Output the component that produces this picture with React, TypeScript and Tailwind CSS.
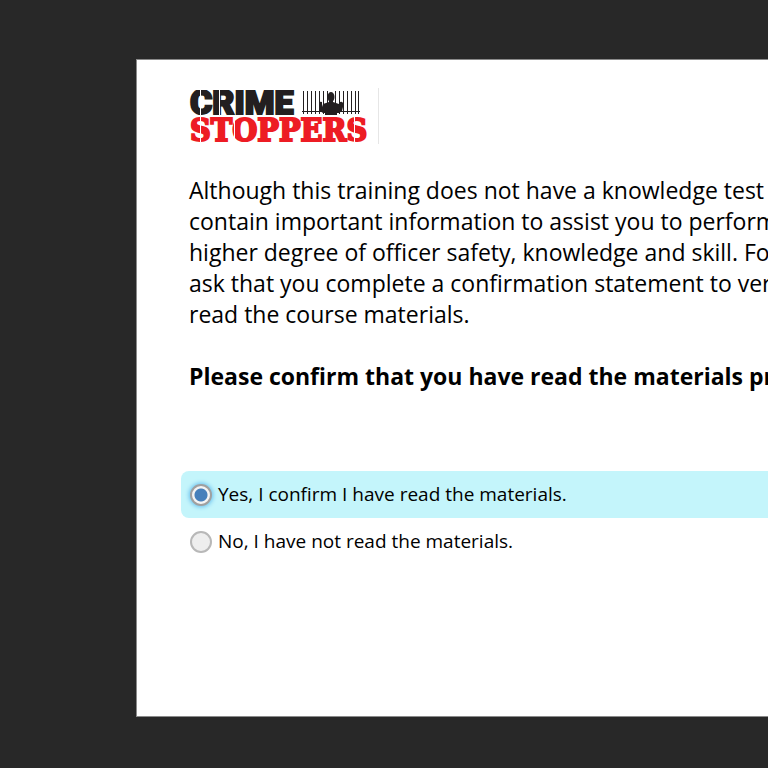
import React from 'react';

const barPositions = [303, 307, 311, 315, 319, 323, 339, 343, 347, 351, 355, 358];
const topCuts = [200, 219];
const bottomCuts = [200, 234, 354];

const Logo: React.FC = () => (
  <svg viewBox="189 88 178 56" className="h-14 w-[178px] shrink-0" role="img" aria-label="Crime Stoppers">
    <text x="190" y="114" fontFamily="Roboto, sans-serif" fontWeight="900" fontSize="34" fill="#231f20" stroke="#231f20" strokeWidth="2">
      CRIME
    </text>
    <text
      x="190"
      y="141"
      fontFamily="'DejaVu Serif Condensed', 'DejaVu Serif', serif"
      fontWeight="700"
      fontSize="32"
      fill="#ed1c24"
      stroke="#ed1c24"
      strokeWidth="2"
    >
      STOPPERS
    </text>
    <g fill="#ffffff">
      <rect x="189" y="88" width="178" height="2" />
      <rect x="189" y="115" width="178" height="1" />
      {topCuts.map((x) => (
        <rect key={x} x={x} y="88" width="1" height="28" />
      ))}
      {bottomCuts.map((x) => (
        <rect key={x} x={x} y="116" width="1" height="28" />
      ))}
    </g>
    <g fill="#231f20">
      {barPositions.map((x) => (
        <rect key={x} x={x} y="91" width="1" height="23" />
      ))}
      <rect x="327" y="91" width="1" height="12" />
      <rect x="335" y="91" width="1" height="12" />
      <rect x="302" y="111" width="58" height="1" />
      <ellipse cx="331" cy="97" rx="3.5" ry="5" />
      <path d="M329 100h4v2l6 2 1 3v-5q2-1 3 1v4l-1 4-3 2h-2v2h-12v-2h-2l-3-2-1-4v-4q1-2 3-1v5l1-3 6-2z" />
    </g>
  </svg>
);

interface OptionProps {
  label: string;
  value: string;
  defaultChecked?: boolean;
}

const Option: React.FC<OptionProps> = ({ label, value, defaultChecked }) => (
  <label className="flex h-[47px] items-center gap-1.5 rounded-l-lg pl-[9px] text-[19px] whitespace-nowrap has-checked:bg-[#c4f5fb]">
    <input
      type="radio"
      name="confirmation"
      value={value}
      defaultChecked={defaultChecked}
      className="size-[22px] shrink-0 appearance-none rounded-full border-2 border-[#b8b8b8] bg-[#eeeeee] checked:border-[#a0a0a0] checked:bg-[radial-gradient(circle,#4780bb_0_6px,#f4f4f4_7px)] checked:shadow-[0_0_4px_1px_#68bfee]"
    />
    {label}
  </label>
);

const App: React.FC = () => {
  return (
    <main className="min-h-screen overflow-hidden bg-[#282828] pt-[59px] pb-[51px] pl-[136px] font-['Open_Sans',sans-serif] text-black">
      <section className="min-h-[658px] border border-r-0 border-[#8a8a8a] bg-white pt-7 pl-11">
        <header className="flex items-center pl-2">
          <Logo />
          <div className="ml-[11px] h-14 w-px bg-[#e6e6e6]" />
        </header>

        <p className="mt-[31px] pl-2 text-[23px] leading-[31px] whitespace-nowrap">
          Although this training does not have a knowledge test a
          <br />
          contain important information to assist you to perform
          <br />
          higher degree of officer safety, knowledge and skill. For
          <br />
          ask that you complete a confirmation statement to veri
          <br />
          read the course materials.
        </p>

        <h1 className="mt-[31px] pl-2 text-[23px] leading-[31px] font-bold whitespace-nowrap">
          Please confirm that you have read the materials pro
        </h1>

        <form className="mt-[79px]">
          <Option label="Yes, I confirm I have read the materials." value="yes" defaultChecked />
          <Option label="No, I have not read the materials." value="no" />
        </form>
      </section>
    </main>
  );
};

export default App;
